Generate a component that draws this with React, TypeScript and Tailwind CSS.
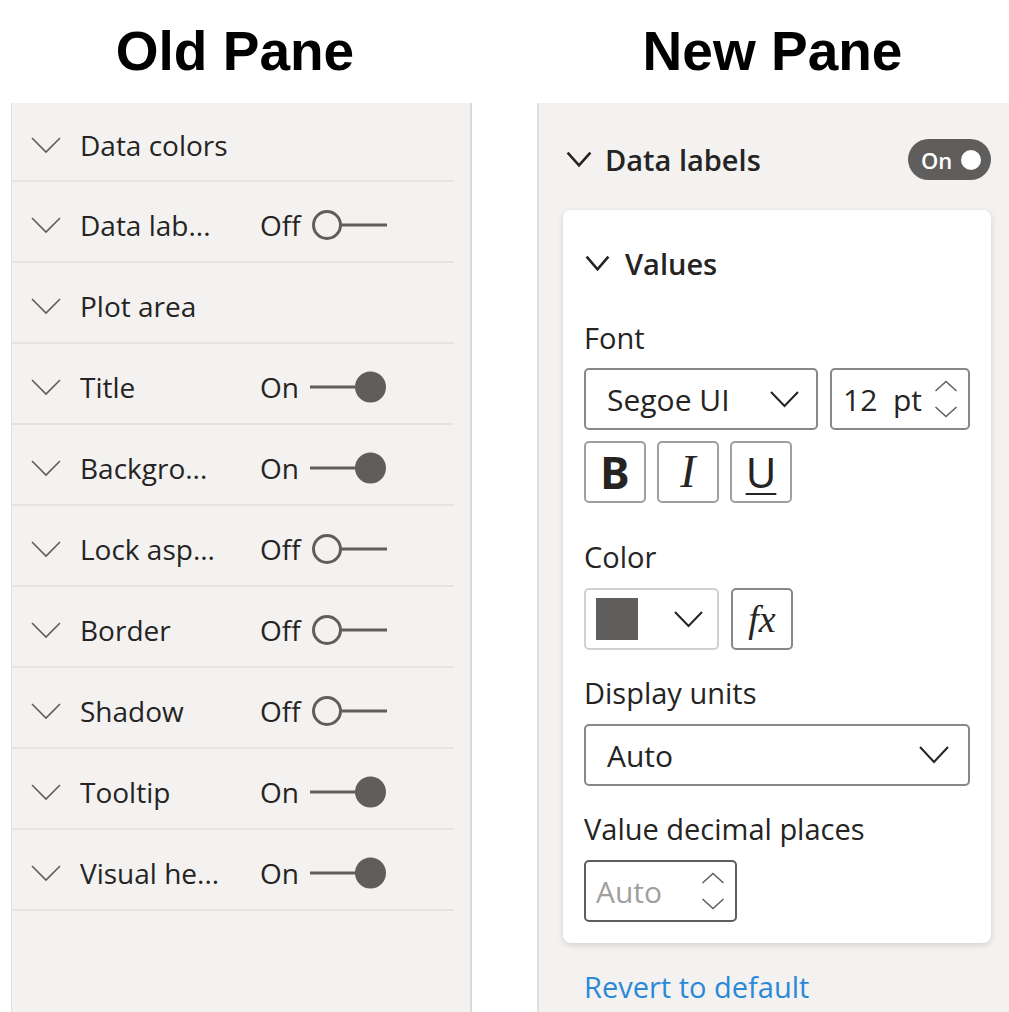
import React from "react";

const font = { fontFamily: '"Open Sans", "Noto Sans", sans-serif' };

function ThinChevron() {
  return (
    <svg width="32" height="18" viewBox="0 0 32 18" className="shrink-0">
      <path d="M2 2 L16 16 L30 2" fill="none" stroke="#605e5c" strokeWidth="1.6" />
    </svg>
  );
}

function OldToggle({ on }: { on: boolean }) {
  return (
    <svg width="82" height="34" viewBox="0 0 82 34" className="shrink-0">
      {on ? (
        <>
          <line x1="2" y1="17" x2="60" y2="17" stroke="#605e5c" strokeWidth="3.2" />
          <circle cx="62.5" cy="17" r="15.5" fill="#605e5c" />
        </>
      ) : (
        <>
          <circle cx="19" cy="17" r="13.5" fill="none" stroke="#605e5c" strokeWidth="3" />
          <line x1="32.5" y1="17" x2="79" y2="17" stroke="#605e5c" strokeWidth="3.2" />
        </>
      )}
    </svg>
  );
}

const oldRows: { label: string; toggle?: "On" | "Off" }[] = [
  { label: "Data colors" },
  { label: "Data lab...", toggle: "Off" },
  { label: "Plot area" },
  { label: "Title", toggle: "On" },
  { label: "Backgro...", toggle: "On" },
  { label: "Lock asp...", toggle: "Off" },
  { label: "Border", toggle: "Off" },
  { label: "Shadow", toggle: "Off" },
  { label: "Tooltip", toggle: "On" },
  { label: "Visual he...", toggle: "On" },
];

function Chevron({ w, h, sw, color = "#252423" }: { w: number; h: number; sw: number; color?: string }) {
  return (
    <svg width={w} height={h + sw * 2} viewBox={`0 0 ${w} ${h + sw * 2}`} className="shrink-0">
      <path
        d={`M${sw} ${sw} L${w / 2} ${h + sw / 2} L${w - sw} ${sw}`}
        fill="none"
        stroke={color}
        strokeWidth={sw}
        strokeLinejoin="miter"
      />
    </svg>
  );
}

function Spinner() {
  return (
    <div className="flex flex-col items-center gap-[14px]">
      <svg width="24" height="12" viewBox="0 0 24 12">
        <path d="M1.5 11 L12 1.5 L22.5 11" fill="none" stroke="#605e5c" strokeWidth="1.5" />
      </svg>
      <svg width="24" height="12" viewBox="0 0 24 12">
        <path d="M1.5 1 L12 10.5 L22.5 1" fill="none" stroke="#605e5c" strokeWidth="1.5" />
      </svg>
    </div>
  );
}

export default function App() {
  return (
    <div className="flex w-[1009px] h-[1012px] bg-white overflow-hidden text-[#252423]" style={font}>
      {/* Old pane */}
      <div className="flex flex-col w-[480px] shrink-0">
        <div
          className="h-[103px] flex items-center justify-center text-[55px] font-bold text-black pr-[10px]"
          style={{ fontFamily: '"Liberation Sans", Arial, sans-serif' }}
        >
          Old Pane
        </div>
        <div className="ml-[11px] w-[461px] flex-1 bg-[#f3f2f1] border-l border-l-[#e1dfdd] border-r-2 border-r-[#dcdad8]">
          {oldRows.map((r, i) => (
            <div
              key={r.label}
              className={`w-[442px] flex items-center border-b-2 border-b-[#e6e4e2] pt-[6px] ${i === 0 ? "h-[79px]" : "h-[81px]"}`}
            >
              <div className="w-[18px] shrink-0" />
              <ThinChevron />
              <div className="w-[18px] shrink-0" />
              <div className="w-[180px] shrink-0 text-[28px] leading-none text-[#252423] whitespace-nowrap">{r.label}</div>
              {r.toggle && (
                <div className="flex items-center">
                  <span className="w-[48px] text-[28px] leading-none text-[#252423]">{r.toggle}</span>
                  <OldToggle on={r.toggle === "On"} />
                </div>
              )}
            </div>
          ))}
        </div>
      </div>

      {/* New pane */}
      <div className="flex flex-col flex-1">
        <div
          className="h-[103px] flex items-center justify-center text-[55px] font-bold text-black pl-[56px]"
          style={{ fontFamily: '"Liberation Sans", Arial, sans-serif' }}
        >
          New Pane
        </div>
        <div className="ml-[57px] flex-1 bg-[#f3f2f1] border-l-2 border-l-[#e1dfdd] pl-[24px] pr-[18px]">
          {/* Data labels header */}
          <div className="mt-[36px] h-[41px] flex items-center justify-between">
            <div className="flex items-center">
              <div className="w-[2px]" />
              <Chevron w={28} h={14} sw={2.6} />
              <span className="ml-[12px] text-[29px] font-semibold text-[#252423]">Data labels</span>
            </div>
            <div className="w-[83px] h-[41px] rounded-full bg-[#605e5c] flex items-center pl-[13px] pr-[10px] justify-between">
              <span className="text-[22px] text-white font-semibold leading-none">On</span>
              <span className="w-[20px] h-[20px] rounded-full bg-white" />
            </div>
          </div>

          {/* Card */}
          <div className="mt-[30px] bg-white rounded-[8px] shadow-[0_2px_6px_rgba(0,0,0,0.14)] pl-[21px] pr-[21px] pt-[34px] pb-[21px]">
            <div className="h-[40px] flex items-center">
              <Chevron w={27} h={14} sw={2.6} />
              <span className="ml-[14px] text-[29px] font-semibold text-[#252423]">Values</span>
            </div>

            <div className="mt-[39px] h-[30px] flex items-center text-[29px]">Font</div>
            <div className="mt-[15px] flex gap-[12px]">
              <div className="w-[234px] h-[62px] border-2 border-[#8a8886] rounded-[5px] flex items-center justify-between pl-[21px] pr-[16px]">
                <span className="text-[30px]">Segoe UI</span>
                <Chevron w={31} h={15} sw={2} />
              </div>
              <div className="w-[140px] h-[62px] border-2 border-[#8a8886] rounded-[5px] flex items-center justify-between pl-[11px] pr-[10px]">
                <span className="text-[30px] whitespace-nowrap">12&nbsp;&nbsp;pt</span>
                <Spinner />
              </div>
            </div>

            <div className="mt-[11px] flex gap-[11px]">
              <div className="w-[62px] h-[62px] border-2 border-[#a19f9d] rounded-[5px] flex items-center justify-center">
                <span className="text-[44px] font-bold leading-none text-[#252423]" style={{ fontFamily: '"Noto Sans", sans-serif' }}>B</span>
              </div>
              <div className="w-[62px] h-[62px] border-2 border-[#a19f9d] rounded-[5px] flex items-center justify-center">
                <span className="text-[46px] italic leading-none text-[#252423]" style={{ fontFamily: '"Liberation Serif", serif' }}>I</span>
              </div>
              <div className="w-[62px] h-[62px] border-2 border-[#a19f9d] rounded-[5px] flex items-center justify-center">
                <span className="text-[42px] underline decoration-2 underline-offset-[5px] leading-none text-[#252423]" style={{ fontFamily: '"Noto Sans", sans-serif' }}>U</span>
              </div>
            </div>

            <div className="mt-[39px] h-[30px] flex items-center text-[29px]">Color</div>
            <div className="mt-[16px] flex gap-[12px]">
              <div className="w-[135px] h-[62px] border-2 border-[#d2d0ce] rounded-[5px] flex items-center pl-[10px] pr-[13px] justify-between">
                <span className="w-[42px] h-[42px] bg-[#605e5c]" />
                <Chevron w={31} h={15} sw={2} />
              </div>
              <div className="w-[62px] h-[62px] border-2 border-[#8a8886] rounded-[5px] flex items-center justify-center">
                <span className="text-[38px] italic leading-none text-[#252423]" style={{ fontFamily: '"Liberation Serif", serif' }}>fx</span>
              </div>
            </div>

            <div className="mt-[28px] h-[30px] flex items-center text-[29px]">Display units</div>
            <div className="mt-[16px] h-[62px] border-2 border-[#8a8886] rounded-[5px] flex items-center justify-between pl-[21px] pr-[18px]">
              <span className="text-[30px]">Auto</span>
              <Chevron w={32} h={16} sw={2} />
            </div>

            <div className="mt-[28px] h-[30px] flex items-center text-[29px]">Value decimal places</div>
            <div className="mt-[16px] w-[153px] h-[62px] border-2 border-[#605e5c] rounded-[5px] flex items-center justify-between pl-[10px] pr-[10px]">
              <span className="text-[30px] text-[#a19f9d]">Auto</span>
              <Spinner />
            </div>
          </div>

          <div className="mt-[29px] ml-[21px] h-[30px] flex items-center text-[29px] text-[#2b88d8] whitespace-nowrap">Revert to default</div>
        </div>
      </div>
    </div>
  );
}
